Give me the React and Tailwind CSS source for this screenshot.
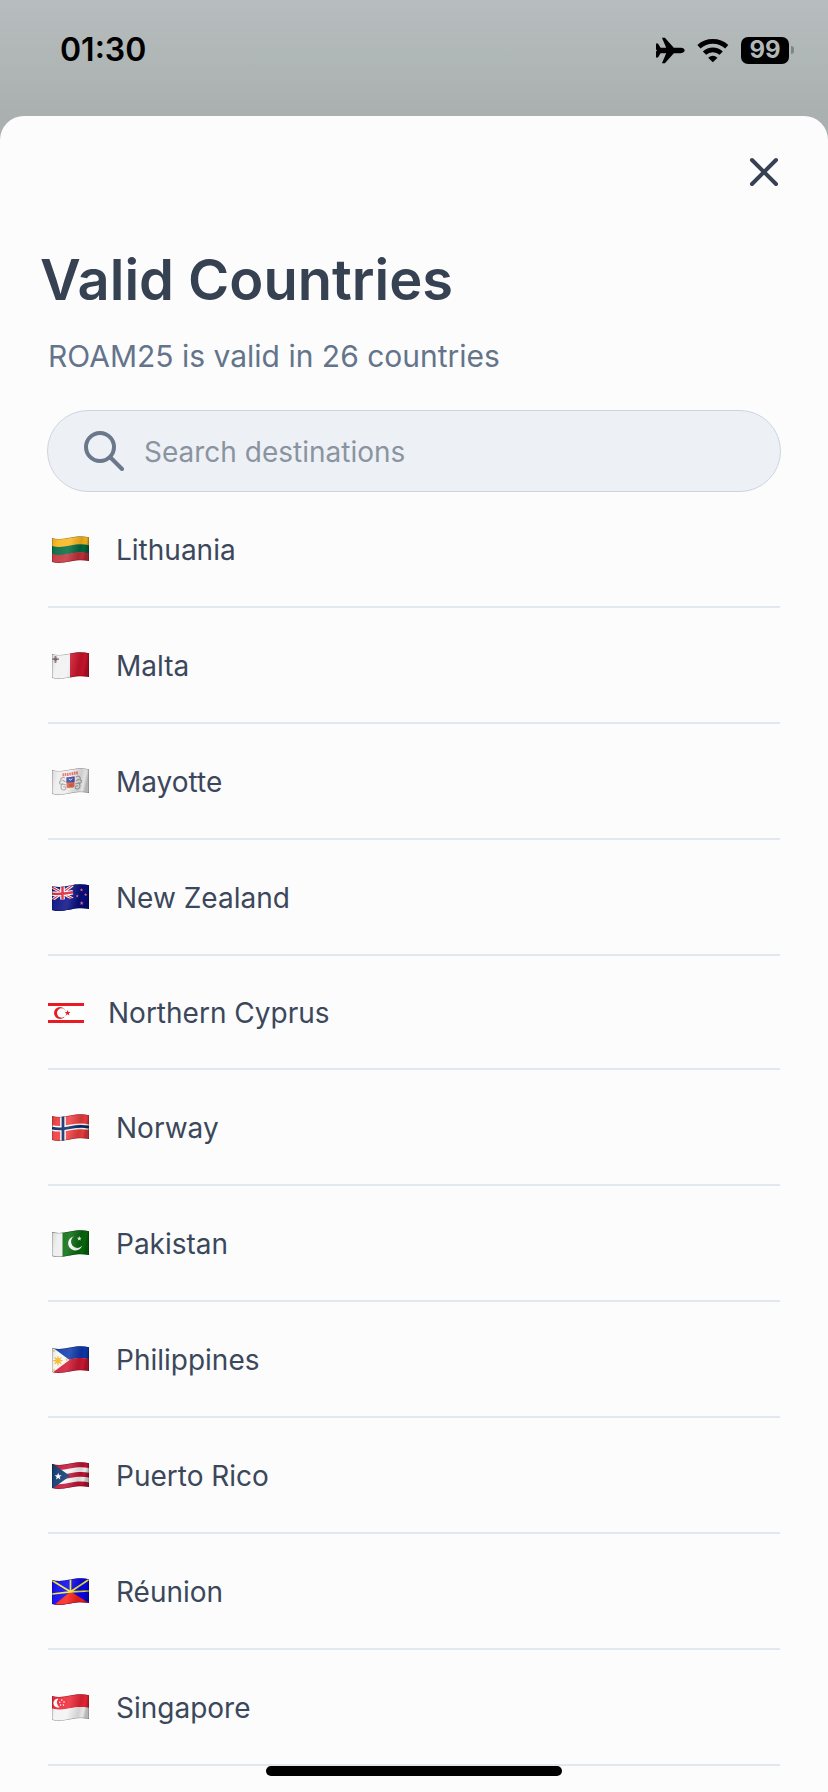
import { useState } from 'react';
import { X } from 'lucide-react';

const OUTLINE =
  'M0 2 C6 3.6 11 3 18 1.6 C25 .2 31 -.2 37 1.2 V25 C31 23.6 25 24 18 25.4 C11 26.8 6 27.6 0 26 Z';

// horizontal stripe that follows the wave of the cloth
function Stripe({ y, h, fill }) {
  return (
    <path
      d={`M0 ${y + 2} C6 ${y + 3.6} 11 ${y + 3} 18 ${y + 1.6} C25 ${y + 0.2} 31 ${y - 0.2} 37 ${y + 1.2} v${h} C31 ${y + h - 0.2} 25 ${y + h + 0.2} 18 ${y + h + 1.6} C11 ${y + h + 3} 6 ${y + h + 3.6} 0 ${y + h + 2} Z`}
      fill={fill}
    />
  );
}

function Star({ x, y, r, fill }) {
  const points = [];
  for (let i = 0; i < 10; i += 1) {
    const angle = (Math.PI / 5) * i - Math.PI / 2;
    const radius = i % 2 ? r * 0.42 : r;
    points.push(`${x + radius * Math.cos(angle)},${y + radius * Math.sin(angle)}`);
  }
  return <polygon points={points.join(' ')} fill={fill} />;
}

function WavyFlag({ id, children }) {
  return (
    <svg viewBox="0 0 37 27" className="mr-[7px] ml-1 h-[27px] w-[37px] shrink-0" aria-hidden="true">
      <defs>
        <clipPath id={`${id}-clip`}>
          <path d={OUTLINE} />
        </clipPath>
        <linearGradient id={`${id}-shade`} x1="0" x2="1" y1="0" y2="0.15">
          <stop offset="0" stopColor="#000" stopOpacity="0.12" />
          <stop offset="0.2" stopColor="#fff" stopOpacity="0.08" />
          <stop offset="0.5" stopColor="#fff" stopOpacity="0.14" />
          <stop offset="0.8" stopColor="#000" stopOpacity="0.14" />
          <stop offset="0.92" stopColor="#000" stopOpacity="0.05" />
          <stop offset="1" stopColor="#000" stopOpacity="0.25" />
        </linearGradient>
      </defs>
      <g clipPath={`url(#${id}-clip)`}>
        {children}
        <path d={OUTLINE} fill={`url(#${id}-shade)`} stroke="#000" strokeOpacity="0.35" />
      </g>
    </svg>
  );
}

function Lithuania() {
  return (
    <WavyFlag id="lt">
      <Stripe y={0} h={8.5} fill="#fab71c" />
      <Stripe y={8} h={8.5} fill="#046a41" />
      <Stripe y={16} h={9} fill="#c6303a" />
    </WavyFlag>
  );
}

function Malta() {
  return (
    <WavyFlag id="mt">
      <rect width="18" height="27" fill="#f1f1f1" />
      <rect x="18" width="19" height="27" fill="#cf142b" />
      <path d="M3.5 4 v7 M0.5 7.2 h6.5" stroke="#8c8080" strokeWidth="1.8" />
      <circle cx="3.6" cy="7.3" r="1.2" fill="#5c4546" />
      <path d="M2 5 L5.2 9.4 M5.2 5 L2 9.4" stroke="#a87277" strokeWidth="0.5" />
    </WavyFlag>
  );
}

function Mayotte() {
  return (
    <WavyFlag id="yt">
      <rect width="37" height="27" fill="#eeeeee" />
      <path d="M10.5 6.8 C15 6.8 21 5.4 26.5 4.6" stroke="#ec6660" strokeWidth="3" strokeDasharray="1.6 0.7" fill="none" />
      <g fill="none" stroke="#a0a0a0" strokeWidth="1.1">
        <path d="M13 10 c-3-1.5-5 .5-4 3 c-3 1-1 4 1 3 c-2 3-1 6 2 6 c3-1 2-4-1-3 M10.5 12 l3 2 M10 16 l4 1" />
        <path d="M24 9 c3-2 5 0 4 3 c3 0 1 4-1 3 c2 3 1 6-2 6 c-3 0-2-4 1-3 M27 11 l-3 2 M27 15 l-4 1" />
      </g>
      <path d="M14.5 9.5 l8-1 v9.5 l-1 1.5 l-6 .6 l-1-1.2 Z" fill="#e5573d" />
      <path d="M14.5 9.5 l8-1 v5.5 l-8 .7 Z" fill="#2947a8" />
      <path d="M16.8 11 q1.6 2.4 3.6-.4" stroke="#f6edcf" fill="none" />
      <path d="M17 16 h3.5 v2.5 H17Z" fill="#b4572b" />
    </WavyFlag>
  );
}

function NewZealand() {
  return (
    <WavyFlag id="nz">
      <rect width="37" height="27" fill="#080f83" />
      <path d="M0 3 L21 15 M0 16 L21 1" stroke="#fff" strokeWidth="3" />
      <path d="M0 3 L21 15 M0 16 L21 1" stroke="#dc2235" strokeWidth="1.1" />
      <path d="M10.5 0 V15.5 M0 9.6 C6 10.6 13 9.8 21 8.2" stroke="#fff" strokeWidth="4.6" fill="none" />
      <path d="M10.5 0 V15.5 M0 9.6 C6 10.6 13 9.8 21 8.2" stroke="#dc2235" strokeWidth="2.4" fill="none" />
      <path d="M0 15.4 C7 17 14 15.5 21.5 14 V27 H0Z M21.5 0 H24 V16 H21.5Z" fill="#080f83" />
      <Star x={29.5} y={6} r={1.9} fill="#ed7584" />
      <Star x={25.2} y={12} r={1.7} fill="#ed7584" />
      <Star x={33.7} y={10.7} r={1.7} fill="#ed7584" />
      <Star x={29.7} y={19.2} r={2.1} fill="#ed7584" />
    </WavyFlag>
  );
}

function NorthernCyprus() {
  return (
    <svg viewBox="0 0 36 22" className="mr-6 h-[22px] w-9 shrink-0" aria-hidden="true">
      <rect width="36" height="22" fill="#fff" />
      <path d="M0 3.5 H36 M0 20.5 H36" stroke="#e81b23" strokeWidth="2.8" />
      <circle cx="12" cy="12" r="6" fill="#e81b23" />
      <circle cx="13.7" cy="12" r="4.7" fill="#fff" />
      <Star x={19.6} y={12} r={3} fill="#e81b23" />
    </svg>
  );
}

function Norway() {
  return (
    <WavyFlag id="no">
      <rect width="37" height="27" fill="#ef3e40" />
      <path d="M11 0 V27 M0 14 C6 15.6 11 15 18 13.6 C25 12.2 31 11.8 37 13.2" stroke="#fff" strokeWidth="5.6" fill="none" />
      <path d="M11 0 V27 M0 14 C6 15.6 11 15 18 13.6 C25 12.2 31 11.8 37 13.2" stroke="#092a68" strokeWidth="2.8" fill="none" />
    </WavyFlag>
  );
}

function Pakistan() {
  return (
    <WavyFlag id="pk">
      <rect width="37" height="27" fill="#066b0d" />
      <rect width="10.5" height="27" fill="#eee" />
      <path d="M22 6.2 A7.2 7.2 0 1 0 30.2 15.5 A6.3 6.3 0 1 1 22 6.2Z" fill="#fff" />
      <Star x={27.3} y={8.6} r={2.5} fill="#fff" />
    </WavyFlag>
  );
}

function Philippines() {
  return (
    <WavyFlag id="ph">
      <Stripe y={-1} h={13} fill="#0e39ad" />
      <Stripe y={11.7} h={14} fill="#d01834" />
      <path d="M0 1 L17.5 14 L0 27Z" fill="#f7f7f5" />
      <path d="M6 10 V19.5 M1.3 14.7 H10.7 M2.6 11.3 L9.4 18.1 M2.6 18.1 L9.4 11.3" stroke="#f7b929" strokeWidth="1.2" />
      <circle cx="6" cy="14.7" r="2.7" fill="#f7b929" />
      <Star x={2} y={5} r={1.4} fill="#f7b929" />
      <Star x={2} y={24} r={1.4} fill="#f7b929" />
      <Star x={14.7} y={13.8} r={1.5} fill="#f7b929" />
    </WavyFlag>
  );
}

function PuertoRico() {
  return (
    <WavyFlag id="pr">
      <rect width="37" height="27" fill="#f6f6f6" />
      <Stripe y={-1} h={5.8} fill="#c21334" />
      <Stripe y={9.6} h={4.8} fill="#c21334" />
      <Stripe y={19.2} h={6} fill="#c21334" />
      <path d="M0 1 L18 14 L0 27Z" fill="#0d386f" />
      <Star x={6.2} y={14.5} r={3.7} fill="#fff" />
    </WavyFlag>
  );
}

function Reunion() {
  return (
    <WavyFlag id="re">
      <rect width="37" height="27" fill="#0a05ef" />
      <path d="M2 27 L18.5 13.5 L37 25 V27Z" fill="#fb2018" />
      <path d="M18.5 13.8 V0 M18.5 13.8 L0 2.5 M18.5 13.8 L37 1.5 M18.5 13.8 L0 16 M18.5 13.8 L37 13" stroke="#efe831" strokeWidth="1.7" />
    </WavyFlag>
  );
}

function Singapore() {
  return (
    <WavyFlag id="sg">
      <Stripe y={-1} h={14} fill="#ee2536" />
      <Stripe y={12.6} h={13} fill="#f3f3f3" />
      <path d="M6.5 4.8 A4.4 4.4 0 1 0 7.8 13 A5 5 0 0 1 6.5 4.8Z" fill="#fff" />
      <g fill="#fff">
        <circle cx="9.8" cy="6" r="0.8" />
        <circle cx="7.8" cy="8.2" r="0.8" />
        <circle cx="12" cy="8" r="0.8" />
        <circle cx="8.6" cy="11" r="0.8" />
        <circle cx="11.4" cy="11" r="0.8" />
      </g>
    </WavyFlag>
  );
}

const countries = [
  { name: 'Lithuania', Flag: Lithuania },
  { name: 'Malta', Flag: Malta },
  { name: 'Mayotte', Flag: Mayotte },
  { name: 'New Zealand', Flag: NewZealand },
  { name: 'Northern Cyprus', Flag: NorthernCyprus, compact: true },
  { name: 'Norway', Flag: Norway },
  { name: 'Pakistan', Flag: Pakistan },
  { name: 'Philippines', Flag: Philippines },
  { name: 'Puerto Rico', Flag: PuertoRico },
  { name: 'Réunion', Flag: Reunion },
  { name: 'Singapore', Flag: Singapore },
];

function StatusBar() {
  return (
    <div className="flex h-[116px] items-start justify-between pt-9 pr-[34px] pl-[60px] text-black">
      <span className="text-[32px] leading-7 font-semibold">01:30</span>
      <div className="flex h-7 items-center gap-3">
        <svg viewBox="108 110 88 80" className="h-[27px] w-[29px]" aria-hidden="true">
          <path d="M126 111 H135 L162 142 H183 Q194 143 195 150 Q194 157 183 158 H162 L135 189 H126 L139 158 H122 L114 171 H108 V153 L111 150 L108 147 V129 H114 L122 142 H139Z" />
        </svg>
        <svg viewBox="233 110 95 75" className="h-[25px] w-8" fill="none" stroke="currentColor" strokeWidth="14" aria-hidden="true">
          <path d="M238.3 136 A62 62 0 0 1 321.7 136" />
          <path d="M255 155.5 A36 36 0 0 1 305 155.5" />
          <path d="M266 169 Q280 158 294 169 L280 183Z" fill="currentColor" stroke="none" />
        </svg>
        <div className="flex items-center gap-0.5">
          <span className="flex h-[27px] w-12 items-center justify-center rounded-[7px] bg-black text-2xl leading-none font-bold text-[#b1b8b8]">
            99
          </span>
          <span className="h-2 w-[3px] rounded-r-full bg-[#7f8585]" />
        </div>
      </div>
    </div>
  );
}

export default function App() {
  const [query, setQuery] = useState('');
  const visible = countries.filter((c) => c.name.toLowerCase().includes(query.toLowerCase()));

  return (
    <div className="flex min-h-screen flex-col bg-[linear-gradient(#b7bdbe_0px,#a9b0af_116px,#a9b0af_100%)] font-['Inter',sans-serif] text-[#374151]">
      <StatusBar />

      <main className="flex flex-1 flex-col rounded-t-3xl bg-[#fcfcfd]">
        <div className="flex justify-end pt-8 pr-10">
          <button type="button" aria-label="Close" className="text-[#364153]">
            <X size={48} strokeWidth={2} />
          </button>
        </div>

        <header className="mt-[52px]">
          <h1 className="px-10 text-[56px] leading-[64px] font-semibold text-[#364152]">Valid Countries</h1>
          <p className="mt-6 px-12 text-[30px] leading-10 text-[#64748b]">ROAM25 is valid in 26 countries</p>
        </header>

        <label className="mx-[47px] mt-[34px] flex h-[82px] items-center gap-5 rounded-full border border-[#cbd5e1] bg-[#edf1f6] pr-8 pl-9">
          <svg viewBox="0 0 40 40" className="size-10 shrink-0" fill="none" stroke="#6b778b" strokeWidth="4" strokeLinecap="round" aria-hidden="true">
            <circle cx="16" cy="16" r="14" />
            <path d="M26.5 26.5 L38 38" />
          </svg>
          <input
            type="text"
            aria-label="Search destinations"
            placeholder="Search destinations"
            value={query}
            onChange={(e) => setQuery(e.target.value)}
            className="min-w-0 flex-1 bg-transparent pt-0.5 text-[28px] leading-9 outline-none placeholder:text-[#8a94a0]"
          />
        </label>

        <ul className="mx-12">
          {visible.map(({ name, Flag, compact }) => (
            <li
              key={name}
              className={`flex items-center border-b-2 border-[#e2e8f0] text-[28px] leading-9 text-[#3b475a] ${compact ? 'h-[114px]' : 'h-[116px]'}`}
            >
              <Flag />
              <span className={compact ? 'pt-0.5' : 'pt-0.5 pl-5'}>{name}</span>
            </li>
          ))}
        </ul>
      </main>

      <div className="fixed bottom-4 left-1/2 h-2.5 w-[296px] -translate-x-1/2 rounded-full bg-black" />
    </div>
  );
}
